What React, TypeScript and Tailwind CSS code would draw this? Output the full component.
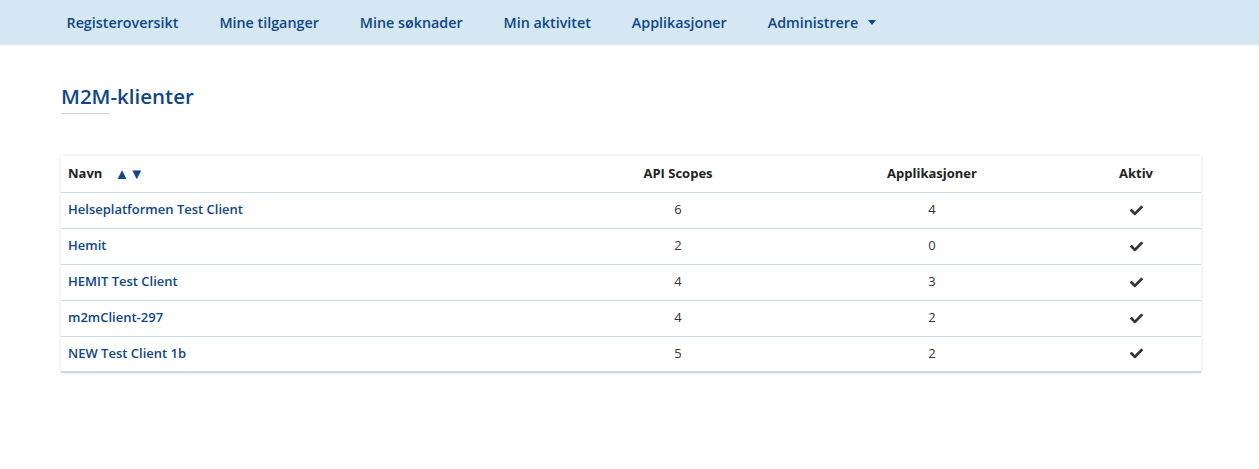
import React from 'react';

const navItems = ['Registeroversikt', 'Mine tilganger', 'Mine søknader', 'Min aktivitet', 'Applikasjoner'];

const clients = [
  { name: 'Helseplatformen Test Client', scopes: 6, apps: 4 },
  { name: 'Hemit', scopes: 2, apps: 0 },
  { name: 'HEMIT Test Client', scopes: 4, apps: 3 },
  { name: 'm2mClient-297', scopes: 4, apps: 2 },
  { name: 'NEW Test Client 1b', scopes: 5, apps: 2 },
];

function CheckIcon() {
  return (
    <svg viewBox="0 0 512 512" className="h-[13px] w-[13px] fill-[#333]">
      <path d="M173.9 439.4 7.5 273c-10-10-10-26.2 0-36.2l36.2-36.2c10-10 26.2-10 36.2 0L192 312.7 432.1 72.6c10-10 26.2-10 36.2 0l36.2 36.2c10 10 10 26.2 0 36.2L210.1 439.4c-10 10-26.2 10-36.2 0z" />
    </svg>
  );
}

export default function App() {
  return (
    <div className="min-h-[469px] bg-white font-['Open_Sans',sans-serif]">
      <nav className="h-[45px] bg-[#d5e7f3]">
        <ul className="flex h-full items-center pl-[46px]">
          {navItems.map((item) => (
            <li key={item} className="px-[20.5px] text-[14.3px] font-semibold text-[#0e4688]">
              {item}
            </li>
          ))}
          <li className="flex items-center gap-[10px] px-[20.5px] text-[14.3px] font-semibold text-[#0e4688]">
            Administrere
            <span className="h-0 w-0 border-x-[4px] border-t-[5px] border-x-transparent border-t-[#0e4688]" />
          </li>
        </ul>
      </nav>

      <main className="ml-[61px] w-[1140px] pt-[36px]">
        <h1 className="text-[20.5px] font-semibold leading-[30px] text-[#0e4688]">M2M-klienter</h1>
        <div className="mt-[2px] h-px w-[49px] bg-[#c6d3df]" />

        <div className="mt-[42px] border-b-2 border-[#c9d9e6] bg-white shadow-[0_0_4px_rgba(0,0,0,0.12)]">
          <table className="w-full border-collapse text-[13px]">
            <thead>
              <tr className="h-[36px] border-b border-[#c9d9e6] text-[#222]">
                <th className="w-[502px] px-[7px] text-left font-bold">
                  <span className="flex items-center">
                    Navn
                    <span className="ml-[12px] text-[15px] leading-none text-[#0e4688]">▲▼</span>
                  </span>
                </th>
                <th className="w-[230px] text-center font-bold">API Scopes</th>
                <th className="w-[278px] text-center font-bold">Applikasjoner</th>
                <th className="text-center font-bold">Aktiv</th>
              </tr>
            </thead>
            <tbody>
              {clients.map((c, i) => (
                <tr
                  key={c.name}
                  className={i < clients.length - 1 ? 'h-[36px] border-b border-[#c9d9e6]' : 'h-[35px]'}
                >
                  <td className="px-[7px] font-semibold text-[#0e4688]">{c.name}</td>
                  <td className="text-center text-[#333]">{c.scopes}</td>
                  <td className="text-center text-[#333]">{c.apps}</td>
                  <td>
                    <div className="flex justify-center">
                      <CheckIcon />
                    </div>
                  </td>
                </tr>
              ))}
            </tbody>
          </table>
        </div>
      </main>
    </div>
  );
}
